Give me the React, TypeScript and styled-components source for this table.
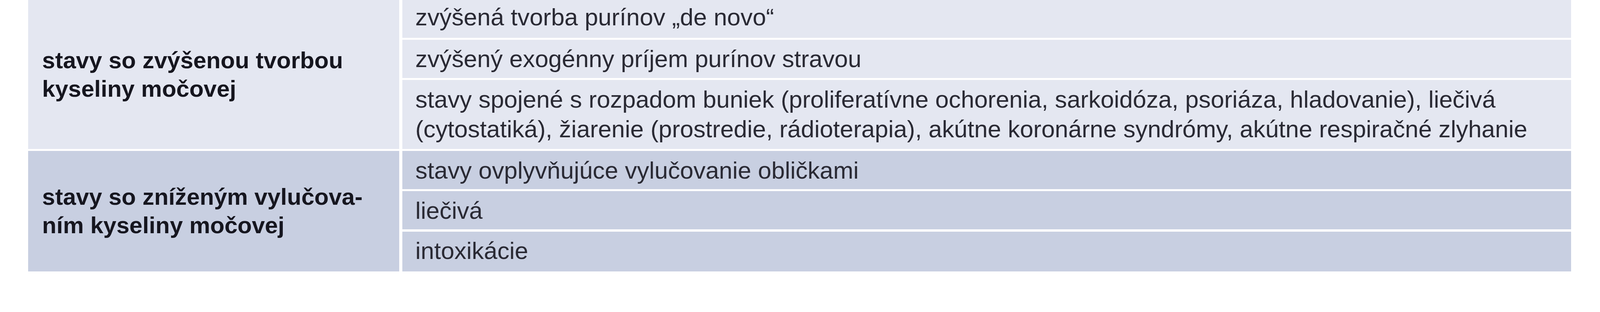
import React from "react";
import styled, { createGlobalStyle } from "styled-components";

// All lengths are expressed in units of the 4368px-wide reference frame,
// so the layout keeps its proportions whatever the CSS viewport width is.
const u = (n: number) => `calc(${n} * 100vw / 4368)`;

const GlobalStyle = createGlobalStyle`
  html, body {
    margin: 0;
    padding: 0;
    background: #ffffff;
    overflow: hidden;
  }
  body {
    font-family: "Liberation Sans", Arial, sans-serif;
  }
`;

const Page = styled.div`
  width: 100vw;
  height: ${u(800)};
  box-sizing: border-box;
  padding-left: ${u(77)};
  background: #ffffff;
  overflow: hidden;
`;

const Table = styled.div`
  width: ${u(4212)};
  display: flex;
  flex-direction: column;
  gap: ${u(6)};
`;

const Group = styled.section`
  display: grid;
  grid-template-columns: ${u(1013)} 1fr;
  column-gap: ${u(8)};
`;

const Label = styled.div<{ $bg: string }>`
  display: flex;
  align-items: center;
  box-sizing: border-box;
  padding: 0 ${u(38)};
  background: ${(p) => p.$bg};
  color: #16161f;
  font-weight: 700;
  font-size: ${u(64)};
  line-height: ${u(78)};
`;

const Items = styled.div`
  display: flex;
  flex-direction: column;
  gap: ${u(6)};
`;

const Item = styled.div<{ $bg: string; $top?: number; $bottom?: number }>`
  box-sizing: border-box;
  padding: ${(p) => u(p.$top ?? 12)} ${u(36)} ${(p) => u(p.$bottom ?? 10)} ${u(36)};
  background: ${(p) => p.$bg};
  color: #2a2a34;
  font-size: ${u(66)};
  line-height: ${u(82)};
`;

const LIGHT = "#e4e7f1";
const DARK = "#c8cfe1";

export default function App() {
  return (
    <>
      <GlobalStyle />
      <Page>
        <Table>
          <Group>
            <Label $bg={LIGHT}>stavy so zvýšenou tvorbou kyseliny močovej</Label>
            <Items>
              <Item $bg={LIGHT} $top={6} $bottom={15}>
                zvýšená tvorba purínov „de novo“
              </Item>
              <Item $bg={LIGHT}>zvýšený exogénny príjem purínov stravou</Item>
              <Item $bg={LIGHT} $top={12} $bottom={12}>
                stavy spojené s rozpadom buniek (proliferatívne ochorenia, sarkoidóza, psoriáza,
                hladovanie), liečivá (cytostatiká), žiarenie (prostredie, rádioterapia), akútne
                koronárne syndrómy, akútne respiračné zlyhanie
              </Item>
            </Items>
          </Group>
          <Group>
            <Label $bg={DARK}>
              <span>
                stavy so zníženým vylučova-
                <br />
                ním kyseliny močovej
              </span>
            </Label>
            <Items>
              <Item $bg={DARK}>stavy ovplyvňujúce vylučovanie obličkami</Item>
              <Item $bg={DARK}>liečivá</Item>
              <Item $bg={DARK} $top={12} $bottom={15}>
                intoxikácie
              </Item>
            </Items>
          </Group>
        </Table>
      </Page>
    </>
  );
}
